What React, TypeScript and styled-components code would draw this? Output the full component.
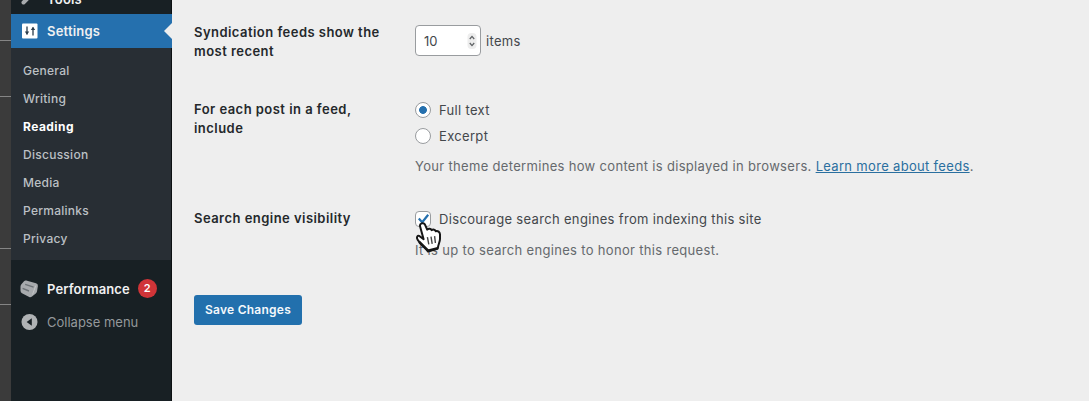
import React from "react";
import styled, { createGlobalStyle, css } from "styled-components";

const Global = createGlobalStyle`
  * { box-sizing: border-box; }
  body { margin: 0; background: #eeeeee; }
`;

const Page = styled.div`
  display: flex;
  width: 1089px;
  height: 401px;
  overflow: hidden;
  background: #eeeeee;
  font-family: Inter, "Liberation Sans", sans-serif;
  font-size: 13px;
  color: #43474b;
`;

const Gutter = styled.div`
  width: 11px;
  flex: none;
  background: #3b3b3b;
`;

const Rule = styled.div<{ $space: number }>`
  height: ${(p) => p.$space}px;
  border-bottom: 1px solid #858585;
`;

const Sidebar = styled.nav`
  width: 161px;
  flex: none;
  display: flex;
  flex-direction: column;
  background: #182024;
  border-right: 1px solid #0c1012;
`;

const MenuItem = styled.div<{ $height: number; $color?: string; $weight?: number; $spacing?: number }>`
  display: flex;
  align-items: center;
  flex: none;
  height: ${(p) => p.$height}px;
  padding-left: 9px;
  gap: 8px;
  color: ${(p) => p.$color ?? "#f0f0f1"};
  font-size: 13px;
  font-weight: ${(p) => p.$weight ?? 600};
  letter-spacing: ${(p) => p.$spacing ?? 0}px;
  white-space: nowrap;
  svg { flex: none; }
`;

const ToolsItem = styled(MenuItem)`
  align-items: flex-end;
  line-height: 30px;
`;

const ActiveItem = styled(MenuItem)`
  position: relative;
  background: #2570ae;
  margin-right: -1px;
  &::after {
    content: "";
    position: absolute;
    right: 0;
    top: 9px;
    border: 8px solid transparent;
    border-left-width: 0;
    border-right-color: #eeeeee;
  }
`;

const Submenu = styled.div`
  flex: none;
  height: 212px;
  padding: 8px 0 0 12px;
  background: #282e34;
  margin-bottom: 11px;
`;

const SubItem = styled.div<{ $current?: boolean }>`
  height: 28px;
  line-height: 29px;
  font-size: 12px;
  color: #bcc0c4;
  font-weight: 500;
  letter-spacing: 0.27px;
  ${(p) => p.$current && css`
    color: #ffffff;
    font-weight: 700;
    letter-spacing: 0.45px;
  `}
`;

const Badge = styled.span`
  width: 19px;
  height: 19px;
  border-radius: 50%;
  background: #d03438;
  color: #fff;
  font-size: 11px;
  line-height: 19px;
  text-align: center;
`;

const Main = styled.main`
  flex: 1;
  padding: 23px 0 0 22px;
`;

const Row = styled.div<{ $height: number }>`
  display: flex;
  height: ${(p) => p.$height}px;
`;

const Heading = styled.div`
  width: 221px;
  flex: none;
  font-weight: 600;
  line-height: 18.5px;
  letter-spacing: 0.46px;
  color: #24282b;
  white-space: pre-line;
`;

const Field = styled.div<{ $offset?: number }>`
  padding-top: ${(p) => p.$offset ?? 0}px;
  white-space: nowrap;
`;

const Line = styled.label<{ $height: number; $gap?: number }>`
  display: flex;
  align-items: center;
  height: ${(p) => p.$height}px;
  gap: ${(p) => p.$gap ?? 8}px;
`;

const Label = styled.span`
  letter-spacing: 0.33px;
`;

const NumberBox = styled.span`
  display: flex;
  align-items: center;
  justify-content: space-between;
  width: 66px;
  height: 31px;
  padding: 0 3px 0 8px;
  background: #fff;
  border: 1px solid #999c9f;
  border-radius: 4px;
`;

const Radio = styled.span<{ $on?: boolean }>`
  width: 16px;
  height: 16px;
  border: 1px solid #999c9f;
  border-radius: 50%;
  background: ${(p) => (p.$on ? "radial-gradient(circle, #2570ae 3.5px, #fff 4.3px)" : "#fff")};
`;

const Checkbox = styled.span`
  position: relative;
  width: 16px;
  height: 16px;
  border: 1px solid #999c9f;
  border-radius: 4px;
  background: #fff;
  > svg { position: absolute; }
`;

const Tick = styled.svg`
  left: 1px;
  top: 0;
`;

const Pointer = styled.svg`
  left: 0;
  top: 9px;
  z-index: 2;
`;

const Hint = styled.p<{ $top: number }>`
  margin: ${(p) => p.$top}px 0 0;
  line-height: 20px;
  color: #65696d;
  letter-spacing: 0.32px;
`;

const Link = styled.a`
  color: #2a6f9f;
  text-decoration: underline;
`;

const SaveButton = styled.button`
  display: block;
  width: 108px;
  height: 30px;
  padding: 0 0 1px;
  border: 0;
  border-radius: 3px;
  background: #2270ad;
  color: #f4f8fb;
  font: 600 12px Inter, "Liberation Sans", sans-serif;
  letter-spacing: 0.25px;
`;

const WrenchIcon = () => (
  <svg width="19" height="14" viewBox="0 0 19 14">
    <path d="M3.5 2.5 12 -6" stroke="#a7aaad" strokeWidth="4" strokeLinecap="round" />
  </svg>
);

const SettingsIcon = () => (
  <svg width="19" height="18" viewBox="0 0 19 18">
    <rect x="2" y="1.5" width="15.5" height="15" rx="1" fill="#fff" />
    <path d="M7 4.5v8M13 5.5v8" stroke="#2a3c4c" strokeWidth="1.3" />
    <path d="M4.8 9.5h4.4L7 12.8zM10.8 8h4.4L13 4.7z" fill="#2a3c4c" />
  </svg>
);

const PerformanceIcon = () => (
  <svg width="19" height="20" viewBox="0 0 19 20">
    <path d="M6.2 1.6 16 4.2Q18.2 4.8 17.9 7L17 12.4Q16.8 13.6 15.8 14.4L12 17.6Q10.6 18.6 9.2 18L2 14.2Q.5 13.4 .5 11.8L.5 7.4Q.6 6.2 1.4 5.3L4 2.2Q5 1.3 6.2 1.6Z" fill="#a7aaad" />
    <path d="M5.2 5.4 13.6 8.2M2.6 9.4 9 12" stroke="#6c7276" strokeWidth="1.4" />
    <path d="M15.8 6.5 12.5 15.5" stroke="#c3c5c7" strokeWidth="1" />
  </svg>
);

const CollapseIcon = () => (
  <svg width="19" height="18" viewBox="0 0 19 18">
    <circle cx="9.5" cy="9" r="8" fill="#b0b3b5" />
    <path d="M11.8 5.2v7.6L6.6 9z" fill="#182024" />
  </svg>
);

const Stepper = () => (
  <svg width="10" height="18" viewBox="0 0 10 18">
    <rect x=".5" y="1" width="9" height="16" rx="4" fill="#ededed" />
    <path d="m2.8 7 2.2-2.6L7.2 7M2.8 11 5 13.6 7.2 11" fill="none" stroke="#606366" strokeWidth="1.3" />
  </svg>
);

const submenu = [
  { label: "General" },
  { label: "Writing" },
  { label: "Reading", current: true },
  { label: "Discussion" },
  { label: "Media" },
  { label: "Permalinks" },
  { label: "Privacy" },
];

export default function App() {
  return (
    <Page>
      <Global />
      <Gutter>
        <Rule $space={41} />
        <Rule $space={56} />
        <Rule $space={152} />
        <Rule $space={56} />
      </Gutter>
      <Sidebar>
        <ToolsItem $height={14} $spacing={0.2}><WrenchIcon />Tools</ToolsItem>
        <ActiveItem $height={34} $spacing={0.2}><SettingsIcon />Settings</ActiveItem>
        <Submenu>
          {submenu.map((s) => (
            <SubItem key={s.label} $current={s.current}>{s.label}</SubItem>
          ))}
        </Submenu>
        <MenuItem $height={35} $spacing={0.1}><PerformanceIcon />Performance<Badge>2</Badge></MenuItem>
        <MenuItem $height={32} $color="#94989b" $weight={400}><CollapseIcon />Collapse menu</MenuItem>
      </Sidebar>
      <Main>
        <Row $height={77}>
          <Heading>{"Syndication feeds show the\nmost recent"}</Heading>
          <Field $offset={2}>
            <Line $height={31} $gap={5}>
              <NumberBox>10<Stepper /></NumberBox>
              <Label>items</Label>
            </Line>
          </Field>
        </Row>
        <Row $height={109}>
          <Heading>{"For each post in a feed,\ninclude"}</Heading>
          <Field>
            <Line $height={20}><Radio $on /><Label>Full text</Label></Line>
            <Line $height={32}><Radio /><Label>Excerpt</Label></Line>
            <Hint $top={4}>
              Your theme determines how content is displayed in browsers. <Link>Learn more about feeds</Link>.
            </Hint>
          </Field>
        </Row>
        <Row $height={86}>
          <Heading>Search engine visibility</Heading>
          <Field>
            <Line $height={20}>
              <Checkbox>
                <Tick width="13" height="13" viewBox="0 0 13 13">
                  <path d="m1.8 6.5 3.4 3.7L11.2 2.8" fill="none" stroke="#2570ae" strokeWidth="2.2" />
                </Tick>
                <Pointer width="28" height="34" viewBox="0 0 28 34">
                  <path
                    d="M5.6 2.4C7.1 1.7 8.5 2.5 9.1 3.9L11.2 8.6C12.6 7.3 14.8 7.5 15.6 9.1C17.2 8.1 19.1 8.6 19.8 10.3C21.8 9.6 23.8 11 24 13.3L24 18C23.9 21.5 22 23.5 21.8 27.5L12 30.5C10.4 27.5 6.5 25 4 22L1.6 18.6C.2 16.2 1.6 14 3.6 15.2L7.6 18.2L4.1 5.4C3.7 4.1 4.3 3 5.6 2.4Z"
                    fill="#fff" stroke="#161616" strokeWidth="2" strokeLinejoin="round"
                  />
                  <path d="m3.2 20.8 8.8 8.9 9.8-2.4" fill="none" stroke="#161616" strokeWidth="2.6" strokeLinejoin="round" />
                  <path d="M11.4 16.2 12.8 23.4M15 15.6 16.2 22.8M18.6 15.2 19.4 22" stroke="#444" strokeWidth="1.4" />
                </Pointer>
              </Checkbox>
              <Label>Discourage search engines from indexing this site</Label>
            </Line>
            <Hint $top={11}>It is up to search engines to honor this request.</Hint>
          </Field>
        </Row>
        <SaveButton>Save Changes</SaveButton>
      </Main>
    </Page>
  );
}
